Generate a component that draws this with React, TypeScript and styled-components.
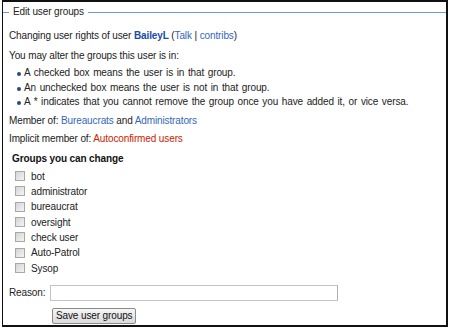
import React from "react";
import styled, { createGlobalStyle } from "styled-components";

const Global = createGlobalStyle`
  html, body { margin: 0; padding: 0; background: #fff; }
  body {
    font-family: "Liberation Sans", Arial, sans-serif;
    font-size: 10px;
    letter-spacing: -0.12px;
    color: #222;
  }
`;

const Frame = styled.div`
  box-sizing: border-box;
  width: 446px;
  height: 327px;
  margin-left: 2px;
  border: 2px solid #111;
  border-left-width: 1px;
  padding: 3px 0 0 0;
`;

const Fieldset = styled.fieldset`
  margin: 0;
  padding: 0 0 0 6px;
  border: none;
  border-top: 1px solid #6d9ad2;
  min-width: 0;
`;

const Legend = styled.legend`
  padding: 0 4px;
  margin-left: 0;
  font-size: 10px;
  line-height: 14px;
  color: #222;
`;

const Para = styled.p<{ $mt: number }>`
  margin: ${(p) => p.$mt}px 0 0 0;
  line-height: 15px;
  white-space: nowrap;
`;

const List = styled.ul`
  margin: 3px 0 0 0;
  padding: 0 0 0 15px;
  list-style: none;
`;

const Item = styled.li`
  line-height: 14.5px;
  position: relative;
  white-space: nowrap;
  word-spacing: 1px;
  &::before {
    content: "";
    position: absolute;
    left: -7px;
    top: 6px;
    width: 4px;
    height: 4px;
    border-radius: 50%;
    background: #2a4a7a;
  }
`;

const Link = styled.a<{ $bold?: boolean; $red?: boolean }>`
  color: ${(p) => (p.$red ? "#cc2200" : p.$bold ? "#1a4aa8" : "#3366bb")};
  font-weight: ${(p) => (p.$bold ? "bold" : "normal")};
  text-decoration: none;
`;

const Heading = styled.h4`
  margin: 5px 0 0 3px;
  font-size: 10px;
  line-height: 16px;
  font-weight: bold;
  color: #111;
`;

const Groups = styled.div`
  margin: 2px 0 0 6px;
  display: grid;
  grid-auto-rows: 15.33px;
`;

const Row = styled.label`
  display: flex;
  align-items: center;
  gap: 6px;
  line-height: 15px;
`;

const Box = styled.input`
  appearance: none;
  margin: 0;
  width: 10px;
  height: 10px;
  box-sizing: border-box;
  border: 1px solid #a8a8a8;
  background: linear-gradient(135deg, #d4d4d4, #f4f4f4);
`;

const ReasonRow = styled.div`
  margin: 9px 0 0 0;
  display: flex;
  align-items: center;
  gap: 5px;
`;

const Input = styled.input`
  box-sizing: border-box;
  width: 288px;
  height: 16px;
  margin: 0;
  border: 1px solid #c4c4c4;
  border-right-color: #b0b0b0;
  background: #fff;
  padding: 0 2px;
`;

const Button = styled.button`
  margin: 7px 0 0 43px;
  box-sizing: border-box;
  height: 16px;
  padding: 0 3px;
  font-family: "Liberation Sans", Arial, sans-serif;
  font-size: 10px;
  letter-spacing: -0.12px;
  line-height: 14px;
  color: #111;
  white-space: nowrap;
  border: 1px solid #8a8a8a;
  border-radius: 2px;
  background: linear-gradient(#f6f6f6, #dadada);
`;

const groups = ["bot", "administrator", "bureaucrat", "oversight", "check user", "Auto-Patrol", "Sysop"];

export default function App() {
  return (
    <>
      <Global />
      <Frame>
        <Fieldset>
          <Legend>Edit user groups</Legend>
          <Para $mt={9}>
            Changing user rights of user <Link $bold>BaileyL</Link> (<Link>Talk</Link> | <Link>contribs</Link>)
          </Para>
          <Para $mt={5}>You may alter the groups this user is in:</Para>
          <List>
            <Item>A checked box means the user is in that group.</Item>
            <Item>An unchecked box means the user is not in that group.</Item>
            <Item>A * indicates that you cannot remove the group once you have added it, or vice versa.</Item>
          </List>
          <Para $mt={3}>
            Member of: <Link>Bureaucrats</Link> and <Link>Administrators</Link>
          </Para>
          <Para $mt={3}>
            Implicit member of: <Link $red>Autoconfirmed users</Link>
          </Para>
          <Heading>Groups you can change</Heading>
          <Groups>
            {groups.map((g) => (
              <Row key={g}>
                <Box type="checkbox" />
                {g}
              </Row>
            ))}
          </Groups>
          <ReasonRow>
            <span>Reason:</span>
            <Input type="text" />
          </ReasonRow>
          <Button>Save user groups</Button>
        </Fieldset>
      </Frame>
    </>
  );
}
